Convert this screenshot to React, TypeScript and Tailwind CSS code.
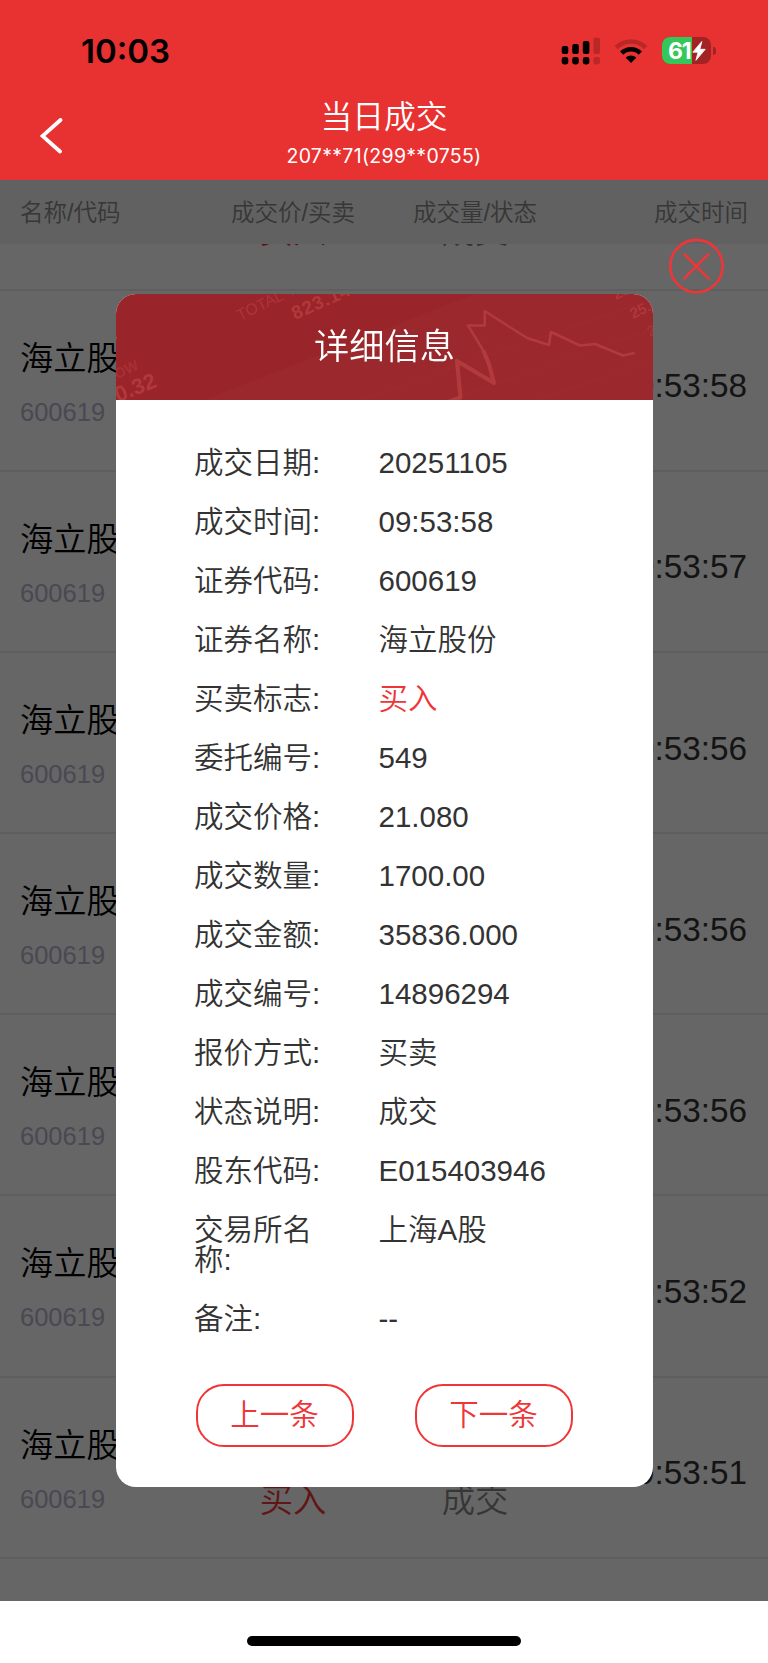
const trades = [
  { time: "09:53:58" },
  { time: "09:53:57" },
  { time: "09:53:56" },
  { time: "09:53:56" },
  { time: "09:53:56" },
  { time: "09:53:52" },
  { time: "09:53:51" },
];

const details: { label: string; value: string; accent?: boolean }[] = [
  { label: "成交日期:", value: "20251105" },
  { label: "成交时间:", value: "09:53:58" },
  { label: "证券代码:", value: "600619" },
  { label: "证券名称:", value: "海立股份" },
  { label: "买卖标志:", value: "买入", accent: true },
  { label: "委托编号:", value: "549" },
  { label: "成交价格:", value: "21.080" },
  { label: "成交数量:", value: "1700.00" },
  { label: "成交金额:", value: "35836.000" },
  { label: "成交编号:", value: "14896294" },
  { label: "报价方式:", value: "买卖" },
  { label: "状态说明:", value: "成交" },
  { label: "股东代码:", value: "E015403946" },
  { label: "交易所名称:", value: "上海A股" },
  { label: "备注:", value: "--" },
];

function SignalIcon() {
  return (
    <svg width="40" height="28" viewBox="0 0 40 28">
      <rect x="0.7" y="9" width="6.6" height="8" rx="2" />
      <rect x="11.2" y="7" width="6.6" height="10" rx="2" />
      <rect x="21.8" y="4" width="6.6" height="13" rx="2" />
      <rect x="32.4" y="0.8" width="6.6" height="16.2" rx="2" opacity="0.2" />
      <rect x="0.7" y="20" width="6.6" height="7.4" rx="2.4" />
      <rect x="11.2" y="20" width="6.6" height="7.4" rx="2.4" />
      <rect x="21.8" y="20" width="6.6" height="7.4" rx="2.4" />
      <rect x="32.4" y="20" width="6.6" height="7.4" rx="2.4" opacity="0.2" />
    </svg>
  );
}

function WifiIcon() {
  return (
    <svg width="34" height="26" viewBox="0 0 34 26" fill="none" stroke="#000" strokeWidth="4.6">
      <path d="M2.3 9.6C10.3 1.4 23.7 1.4 31.7 9.6" opacity="0.2" />
      <path d="M7.7 15.2C12.8 10 21.2 10 26.3 15.2" />
      <path d="M17 25L11.7 19.7C14.7 16.9 19.3 16.9 22.3 19.7Z" fill="#000" stroke="none" />
    </svg>
  );
}

function Battery() {
  return (
    <div className="flex items-center">
      <div className="relative flex h-[27px] w-[49px] items-center overflow-hidden rounded-[8px] bg-[#a32224]">
        <div className="h-full w-[30px] bg-[#34c759]" />
        <div className="absolute inset-0 flex items-center pt-px pl-[6px] font-['Inter'] text-[23px] font-bold tracking-[-1.3px] text-white">
          61
          <svg className="ml-[1.5px] shrink-0" width="14" height="20" viewBox="0 0 13 19" fill="#fff" stroke="#fff" strokeWidth="0.8" strokeLinejoin="round">
            <path d="M9.2 0.5L0.6 10.6H5.6L3.6 18.4L12.4 7.9H7.3Z" />
          </svg>
        </div>
      </div>
      <div className="ml-[2px] h-[8px] w-[3px] rounded-r-full bg-[#a32224]" />
    </div>
  );
}

function BannerArt() {
  return (
    <svg className="absolute inset-0 h-full w-full overflow-hidden" fill="none">
      <path d="M85 107L537 -70V107Z" fill="#fff" opacity="0.015" />
      <path d="M240 107L537 5M330 107L537 35M420 107L537 65" stroke="#c44" strokeWidth="1.2" opacity="0.12" />
      <g fill="#c9494b" fontFamily="Liberation Sans" opacity="0.55">
        <text x="124" y="27" fontSize="16" transform="rotate(-26 124 27)" opacity="0.8">TOTAL VALUE</text>
        <text x="179" y="26" fontSize="19" fontWeight="700" letterSpacing="0.8" transform="rotate(-24 179 26)">823.145</text>
        <text x="-7" y="89" fontSize="14.5" fontWeight="700" transform="rotate(-25 -7 89)" opacity="0.6">LOW</text>
        <text x="-9" y="113" fontSize="22" fontWeight="700" transform="rotate(-22 -9 113)">10.32</text>
        <text x="-5" y="53" fontSize="15" fontWeight="700" transform="rotate(-25 -5 53)">P</text>
        <text x="500" y="6" fontSize="15" fontWeight="700" transform="rotate(-25 500 6)" opacity="0.8">28.4</text>
        <text x="517" y="25" fontSize="15" fontWeight="700" transform="rotate(-25 517 25)" opacity="0.9">25.4</text>
        <text x="534" y="43" fontSize="15" fontWeight="700" transform="rotate(-25 534 43)" opacity="0.6">24</text>
      </g>
      <g stroke="#c94d4f" opacity="0.5" strokeLinejoin="round">
        <path d="M331 108.5L344.5 103.5L341 67L378 89L373 70L367 56" strokeWidth="4.2" />
        <path d="M367 56L352 31.5H368.7V17L411 44L433 51L435 38L464 51.5L479 50L507 61.5L518.7 59" strokeWidth="2.6" />
      </g>
    </svg>
  );
}

function ListRow({ time }: { time: string }) {
  return (
    <div className="flex h-[181.2px] shrink-0 justify-between border-b-2 border-[#ececec] pr-[21px] pl-[20px]">
      <div className="w-[182px] pt-[51px]">
        <div className="text-[33.3px] leading-[34px] text-black">海立股份</div>
        <div className="mt-[22px] text-[25.5px] leading-[28px] text-[#b9b3cd]">600619</div>
      </div>
      <div className="w-[182px] pt-[50px] text-center text-[33.3px]">
        <div className="leading-[34px] text-[#333]">21.080</div>
        <div className="mt-[22px] leading-[34px] text-[#f03538]">买入</div>
      </div>
      <div className="w-[182px] pt-[50px] text-center text-[33.3px]">
        <div className="leading-[34px] text-[#333]">1700</div>
        <div className="mt-[22px] leading-[34px] text-[#888]">成交</div>
      </div>
      <div className="flex flex-1 items-center justify-end pt-[12px] text-[33.3px] text-[#333]">{time}</div>
    </div>
  );
}

export default function App() {
  return (
    <div className="flex h-[1663px] w-[768px] flex-col overflow-hidden bg-white font-['Liberation_Sans','Noto_Sans_CJK_SC_DemiLight','Noto_Sans_CJK_SC',sans-serif] [font-weight:350]">
      <header className="h-[179.5px] shrink-0 bg-[#e83131]">
        <div className="flex h-[95px] items-start justify-between pt-[37px] pr-[52px] pl-[81px]">
          <div className="font-['Inter'] text-[33px] leading-[28px] font-semibold">10:03</div>
          <div className="flex items-start">
            <SignalIcon />
            <div className="mt-px ml-[13px]"><WifiIcon /></div>
            <div className="ml-[14px]"><Battery /></div>
          </div>
        </div>
        <div className="flex h-[84px] text-white">
          <button className="w-[160px] pl-[40px]" aria-label="返回">
            <svg className="-mt-[3px]" width="24" height="36" viewBox="0 0 24 36" fill="none" stroke="#fff" strokeWidth="3.8" strokeLinecap="round">
              <path d="M20.5 2L2.5 18L20 33.5" />
            </svg>
          </button>
          <div className="flex w-[448px] flex-col items-center">
            <h1 className="pt-[5px] text-[31.8px] leading-[34px]">当日成交</h1>
            <div className="mt-[9px] font-['Inter'] text-[19.5px] leading-[26px] font-normal tracking-[0.3px]">207**71(299**0755)</div>
          </div>
        </div>
      </header>

      <main className="relative flex h-[1421px] shrink-0 flex-col overflow-hidden">
        <div className="flex h-[64.5px] shrink-0 items-center justify-between bg-[#f2f2f2] pt-[3px] pr-[20px] pl-[20px] text-[23.5px] text-[#8a8a8a]">
          <span className="w-[182px]">名称/代码</span>
          <span className="w-[182px] text-center">成交价/买卖</span>
          <span className="w-[182px] text-center">成交量/状态</span>
          <span className="flex-1 text-right">成交时间</span>
        </div>
        <div className="flex h-[46.5px] shrink-0 flex-col justify-end overflow-hidden">
          <ListRow time="09:53:58" />
        </div>
        {trades.map((t, i) => (
          <ListRow key={i} time={t.time} />
        ))}

        <div className="absolute inset-0 bg-black/60">
          <button className="absolute top-[58px] left-[668px]" aria-label="关闭">
            <svg width="57" height="57" viewBox="0 0 57 57" fill="none" stroke="#f03538" strokeWidth="2.6" strokeLinecap="round">
              <circle cx="28.4" cy="28.1" r="26.2" />
              <path d="M16.3 16.3L40.3 40.3M40.3 16.3L16.3 40.3" />
            </svg>
          </button>
          <div className="mt-[114px] ml-[116px] flex h-[1193px] w-[537px] flex-col overflow-hidden rounded-[20px] bg-white">
            <div className="relative h-[106.5px] shrink-0 overflow-hidden bg-[#99252a]">
              <BannerArt />
              <h2 className="relative text-center text-[35.3px] leading-[106px] text-white">详细信息</h2>
            </div>
            <dl className="flex flex-col gap-[29.5px] pt-[48px] pl-[78px] text-[29.5px] leading-[29.5px] text-[#333]">
              {details.map((d) => (
                <div key={d.label} className="flex">
                  <dt className="w-[140px]">{d.label}</dt>
                  <dd className={d.accent ? "ml-[44.5px] text-[#f03538]" : "ml-[44.5px]"}>{d.value}</dd>
                </div>
              ))}
            </dl>
            <div className="mt-[50.5px] flex gap-[61px] pl-[79.5px] text-[29.5px] text-[#f03538]">
              <button className="h-[63px] w-[158px] rounded-[28px] border-2 border-[#f03538] pt-px">上一条</button>
              <button className="h-[63px] w-[158px] rounded-[28px] border-2 border-[#f03538] pt-px">下一条</button>
            </div>
          </div>
        </div>
      </main>

      <footer className="flex flex-1 justify-center pt-[35.5px]">
        <div className="h-[10px] w-[274px] rounded-full bg-black" />
      </footer>
    </div>
  );
}
